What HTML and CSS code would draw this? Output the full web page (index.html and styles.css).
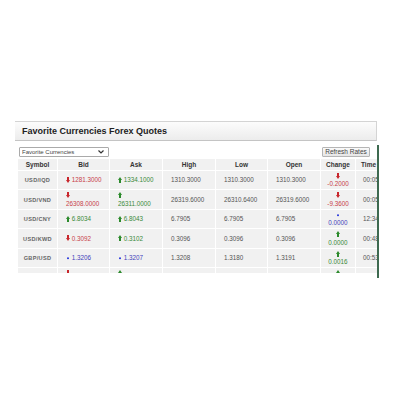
FILE: index.html
```html
<!DOCTYPE html>
<html lang="en">

<head>
  <meta charset="UTF-8">
  <meta name="viewport" content="width=device-width, initial-scale=1.0">
  <title>Favorite Currencies Forex Quotes</title>
  <link rel="stylesheet" href="styles.css">
</head>

<body>

  <div class="widget">
    <div class="widget-title">Favorite Currencies Forex Quotes</div>

    <div class="widget-body">
      <div class="toolbar">
        <select class="list-select">
          <option>Favorite Currencies</option>
          <option>Major Currencies</option>
        </select>
        <button class="refresh-btn" onclick="renderRates()">Refresh Rates</button>
      </div>

      <div class="table-clip">
        <table class="quotes">
          <colgroup>
            <col style="width: 40px">
            <col style="width: 52px">
            <col style="width: 53px">
            <col style="width: 53px">
            <col style="width: 52px">
            <col style="width: 53px">
            <col style="width: 35px">
            <col style="width: 50px">
          </colgroup>
          <thead>
            <tr>
              <th>Symbol</th>
              <th>Bid</th>
              <th>Ask</th>
              <th>High</th>
              <th>Low</th>
              <th>Open</th>
              <th>Change</th>
              <th class="time">Time</th>
            </tr>
          </thead>
          <tbody id="rates"></tbody>
        </table>
      </div>
    </div>
  </div>

  <script>
    const ARROWS = {
      down: '<svg class="arrow down" viewBox="0 0 4 6" width="4" height="6"><path d="M1 0h2v3h1L2 6 0 3h1z"/></svg>',
      up: '<svg class="arrow up" viewBox="0 0 4 6" width="4" height="6"><path d="M2 0l2 3H3v3H1V3H0z"/></svg>',
      same: '<svg class="arrow same" viewBox="0 0 4 6" width="4" height="6"><circle cx="2" cy="3.2" r="1"/></svg>'
    };

    const rates = [
      { symbol: "USD/IQD", bid: ["down", "1281.3000"], ask: ["up", "1334.1000"], high: "1310.3000", low: "1310.3000", open: "1310.3000", change: ["down", "-0.2000"], time: "00:05:12" },
      { symbol: "USD/VND", bid: ["down", "26308.0000"], ask: ["up", "26311.0000"], high: "26319.6000", low: "26310.6400", open: "26319.6000", change: ["down", "-9.3600"], time: "00:05:12" },
      { symbol: "USD/CNY", bid: ["up", "6.8034"], ask: ["up", "6.8043"], high: "6.7905", low: "6.7905", open: "6.7905", change: ["same", "0.0000"], time: "12:34:50" },
      { symbol: "USD/KWD", bid: ["down", "0.3092"], ask: ["up", "0.3102"], high: "0.3096", low: "0.3096", open: "0.3096", change: ["up", "0.0000"], time: "00:48:03" },
      { symbol: "GBP/USD", bid: ["same", "1.3206"], ask: ["same", "1.3207"], high: "1.3208", low: "1.3180", open: "1.3191", change: ["up", "0.0016"], time: "00:53:27" },
      { symbol: "USD/IDR", bid: ["down", "14342.0000"], ask: ["up", "14352.0000"], high: "14360.0000", low: "14335.0000", open: "14340.0000", change: ["up", "2.0000"], time: "00:53:40" }
    ];

    function priceCell(dir, value) {
      const gap = value.length > 9 ? '<br>' : ' ';
      return `<td>${ARROWS[dir]}${gap}<span class="${dir}">${value}</span></td>`;
    }

    function renderRates() {
      const body = document.getElementById('rates');
      body.innerHTML = rates.map(r => `
        <tr>
          <td class="symbol">${r.symbol}</td>
          ${priceCell(r.bid[0], r.bid[1])}
          ${priceCell(r.ask[0], r.ask[1])}
          <td>${r.high}</td>
          <td>${r.low}</td>
          <td>${r.open}</td>
          <td class="change">${ARROWS[r.change[0]]}<br><span class="${r.change[0]}">${r.change[1]}</span></td>
          <td class="time">${r.time}</td>
        </tr>`).join('');
    }

    renderRates();
  </script>
</body>

</html>
```

FILE: styles.css
```css
body {
  margin: 0;
  background: #fff;
  font-family: "Liberation Sans", Arial, sans-serif;
  color: #555;
}

.widget {
  width: 364px;
  margin: 121px 0 0 15px;
}

.widget-title {
  height: 18px;
  line-height: 18px;
  margin-right: 2px;
  padding-left: 7px;
  border: 1px solid #d4d4d4;
  border-left: none;
  border-bottom-color: #c4c4c4;
  background: linear-gradient(#fcfcfc, #ececec);
  font-size: 9px;
  font-weight: bold;
  color: #222;
}

.widget-body {
  margin-top: 4px;
  padding: 2px 0 5px 2px;
  border-right: 2px solid #3e6a50;
}

.toolbar {
  display: flex;
  justify-content: space-between;
  align-items: center;
  height: 10px;
  margin: 0 7px 1px 2px;
}

.list-select {
  appearance: none;
  width: 90px;
  height: 10px;
  padding: 0 0 0 2px;
  border: 1px solid #aaa;
  border-radius: 1px;
  background: #fff url("data:image/svg+xml,%3Csvg xmlns='http://www.w3.org/2000/svg' width='6' height='4' viewBox='0 0 6 4'%3E%3Cpath d='M0.5 0.5L3 3 5.5 0.5' fill='none' stroke='%23333' stroke-width='1.2'/%3E%3C/svg%3E") no-repeat right 4px center;
  font-family: inherit;
  font-size: 6px;
  line-height: 8px;
  color: #444;
}

.refresh-btn {
  height: 10px;
  width: 48px;
  padding: 0;
  border: 1px solid #b5b5b5;
  border-radius: 1px;
  background: linear-gradient(#fafafa, #e6e6e6);
  font-family: inherit;
  font-size: 6.5px;
  line-height: 8px;
  color: #444;
}

.table-clip {
  height: 115px;
  overflow: hidden;
}

.quotes {
  width: 388px;
  table-layout: fixed;
  border-collapse: collapse;
  font-size: 6.3px;
}

.quotes th,
.quotes td {
  border: 1px solid #fff;
  background: #f1f1f1;
  white-space: nowrap;
}

.quotes th {
  height: 11px;
  padding: 0;
  font-size: 6.5px;
  font-weight: bold;
  color: #333;
  text-align: center;
}

.quotes td {
  height: 16px;
  padding: 1px 0 1px 8px;
  line-height: 8px;
  color: #555;
  vertical-align: middle;
}

.quotes tbody tr:nth-child(even) td {
  height: 17px;
}

.quotes td.symbol {
  padding: 0;
  text-align: center;
  font-size: 5.6px;
  font-weight: bold;
  letter-spacing: 0.3px;
  color: #666;
}

.quotes td.change {
  padding: 1px 0;
  text-align: center;
}

.quotes th.time {
  padding-left: 5px;
  text-align: left;
}

.quotes td.time {
  padding-left: 7px;
}

.arrow {
  vertical-align: -0.5px;
}

.arrow.down,
.down {
  fill: #c8262c;
  color: #c8414a;
}

.arrow.up,
.up {
  fill: #2c8a2c;
  color: #3a8a3a;
}

.arrow.same,
.same {
  fill: #2233dd;
  color: #4444bb;
}
```
